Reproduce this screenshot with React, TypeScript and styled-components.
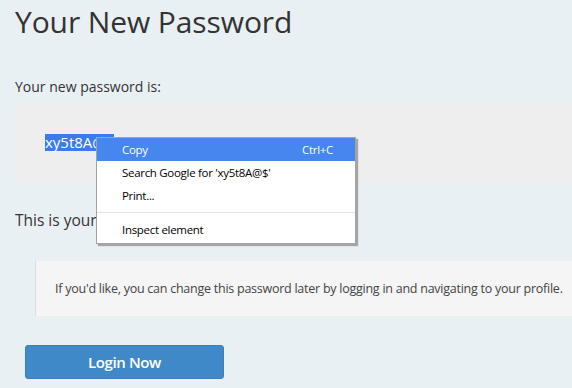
import React from "react";
import styled, { createGlobalStyle } from "styled-components";

const Global = createGlobalStyle`
  html, body { margin: 0; padding: 0; }
  body {
    background: #e9f0f4;
    font-family: "Open Sans", "Noto Sans", sans-serif;
    color: #333;
    width: 572px;
    height: 388px;
    overflow: hidden;
  }
`;

const Page = styled.div`
  position: relative;
  padding: 0 0 0 15px;
`;

const Title = styled.h1`
  margin: 0;
  padding-top: 3px;
  font-size: 30px;
  font-weight: 400;
  line-height: 38px;
  letter-spacing: -0.1px;
  color: #333;
`;

const Label = styled.p`
  margin: 36px 0 0;
  font-size: 14px;
  line-height: 20px;
`;

const PasswordBox = styled.div`
  margin-top: 5px;
  height: 81px;
  background: #eeeeee;
  padding-left: 30px;
  display: flex;
  align-items: center;
  box-sizing: border-box;
`;

const Selected = styled.span`
  background: #3b7ce8;
  color: #fff;
  font-size: 15px;
  line-height: 17px;
`;

const Note = styled.p`
  margin: 27px 0 0;
  font-size: 15.5px;
  line-height: 20px;
`;

const Quote = styled.blockquote`
  margin: 31px 0 0 20px;
  height: 55px;
  background: #f5f5f5;
  border-left: 1px solid #dcdcdc;
  padding-left: 19px;
  display: flex;
  align-items: center;
  font-size: 12.5px;
  color: #444;
  white-space: nowrap;
  letter-spacing: -0.25px;
`;

const Button = styled.button`
  margin: 29px 0 0 10px;
  width: 199px;
  height: 34px;
  background: #3f89c8;
  border: 1px solid #3a80bd;
  border-radius: 3px;
  color: #fff;
  font-family: "Open Sans", "Noto Sans", sans-serif;
  font-size: 15px;
  font-weight: 600;
  letter-spacing: -0.4px;
  display: block;
`;

const Menu = styled.div`
  position: absolute;
  left: 96px;
  top: 137px;
  width: 258px;
  height: 105px;
  background: #fff;
  border: 1px solid #a3a3a3;
  box-shadow: 2px 2px 1px rgba(0, 0, 0, 0.3);
  font-family: "Open Sans", "Noto Sans", sans-serif;
  font-size: 11.5px;
  letter-spacing: -0.3px;
  color: #000;
`;

const Item = styled.div<{ $active?: boolean }>`
  height: 23px;
  display: flex;
  align-items: center;
  justify-content: space-between;
  padding: 0 22px 0 25px;
  background: ${(p) => (p.$active ? "#4586ef" : "transparent")};
  color: ${(p) => (p.$active ? "#fff" : "#000")};
`;

const Separator = styled.div`
  height: 1px;
  background: #e2e2e2;
  margin: 5px 0 5px;
`;

export default function App() {
  return (
    <>
      <Global />
      <Page>
        <Title>Your New Password</Title>
        <Label>Your new password is:</Label>
        <PasswordBox>
          <Selected>xy5t8A@$</Selected>
        </PasswordBox>
        <Note>This is your new password.</Note>
        <Quote>
          If you'd like, you can change this password later by logging in and navigating to your profile.
        </Quote>
        <Button>Login Now</Button>
        <Menu>
          <Item $active>
            <span>Copy</span>
            <span>Ctrl+C</span>
          </Item>
          <Item>
            <span>Search Google for 'xy5t8A@$'</span>
          </Item>
          <Item>
            <span>Print...</span>
          </Item>
          <Separator />
          <Item>
            <span>Inspect element</span>
          </Item>
        </Menu>
      </Page>
    </>
  );
}
